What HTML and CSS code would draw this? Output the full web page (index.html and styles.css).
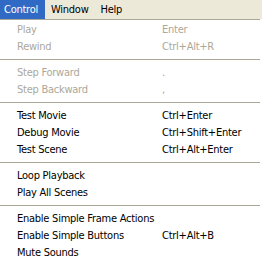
FILE: index.html
```html
<!DOCTYPE html>
<html>
<head>
<meta charset="utf-8">
<link rel="stylesheet" href="styles.css">
</head>
<body>
<div class="menubar">
  <span class="title active">Control</span>
  <span class="title">Window</span>
  <span class="title">Help</span>
</div>
<div class="menu">
  <div class="item disabled"><span>Play</span><span>Enter</span></div>
  <div class="item disabled"><span>Rewind</span><span>Ctrl+Alt+R</span></div>
  <div class="sep"></div>
  <div class="item disabled"><span>Step Forward</span><span>.</span></div>
  <div class="item disabled"><span>Step Backward</span><span>,</span></div>
  <div class="sep"></div>
  <div class="item"><span>Test Movie</span><span>Ctrl+Enter</span></div>
  <div class="item"><span>Debug Movie</span><span>Ctrl+Shift+Enter</span></div>
  <div class="item"><span>Test Scene</span><span>Ctrl+Alt+Enter</span></div>
  <div class="sep"></div>
  <div class="item"><span>Loop Playback</span><span></span></div>
  <div class="item"><span>Play All Scenes</span><span></span></div>
  <div class="sep"></div>
  <div class="item"><span>Enable Simple Frame Actions</span><span></span></div>
  <div class="item"><span>Enable Simple Buttons</span><span>Ctrl+Alt+B</span></div>
  <div class="item"><span>Mute Sounds</span><span></span></div>
</div>
</body>
</html>
```
FILE: styles.css
```css
html, body {
  margin: 0;
  padding: 0;
  background: #ffffff;
}
body {
  font-family: "DejaVu Sans Condensed", "DejaVu Sans", sans-serif;
  font-size: 11px;
  letter-spacing: -0.25px;
  color: #000000;
}
.menubar {
  display: flex;
  height: 19px;
  background: #ece9d8;
}
.title {
  line-height: 19px;
  padding: 0 6px;
}
.title.active {
  padding: 0 7px 0 4px;
  background: #316ac5;
  color: #ffffff;
}
.menu {
  border-top: 1px solid #aca899;
  padding-top: 1px;
  width: 260px;
}
.item {
  display: grid;
  grid-template-columns: 145px auto;
  height: 17px;
  line-height: 17px;
  padding-left: 17px;
  white-space: nowrap;
}
.item.disabled {
  color: #aca899;
}
.shortcut {
  letter-spacing: -0.4px;
}
.sep {
  height: 9px;
  display: flex;
  align-items: center;
}
.sep::before {
  content: "";
  display: block;
  width: 100%;
  height: 1px;
  background: #aca899;
}
```
